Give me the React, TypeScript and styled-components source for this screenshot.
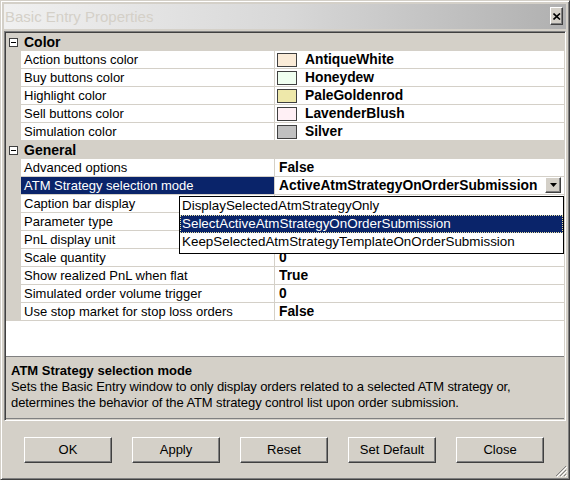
import React from "react";
import styled, { createGlobalStyle } from "styled-components";

const Global = createGlobalStyle`
  html, body { margin: 0; padding: 0; background: #d4d0c8; }
  body { width: 570px; height: 480px; overflow: hidden; font-family: "Liberation Sans", Arial, sans-serif; color: #000; }
  * { box-sizing: border-box; }
`;

const Window = styled.div`
  position: relative;
  width: 570px;
  height: 480px;
  background: #d4d0c8;
  border: 1px solid;
  border-color: #d4d0c8 #404040 #404040 #d4d0c8;
  box-shadow: inset 1px 1px #ffffff, inset -1px -1px #808080;
  padding: 3px;
  display: flex;
  flex-direction: column;
`;

const TitleBar = styled.div`
  height: 25px;
  flex: none;
  display: flex;
  align-items: center;
  justify-content: space-between;
  padding: 0 3px 1px 1px;
  background: linear-gradient(to right, #f0f0f0 0%, #d8d8d8 50%, #b0b0b0 100%);
`;

const TitleText = styled.span`
  font-size: 15px;
  color: #d4d0c8;
  white-space: nowrap;
`;

const CloseButton = styled.div`
  width: 13px;
  height: 18px;
  background: #d4d0c8;
  border: 1px solid;
  border-color: #ffffff #404040 #404040 #ffffff;
  box-shadow: inset -1px -1px #808080;
  display: flex;
  align-items: center;
  justify-content: center;
`;

const Panel = styled.div`
  margin-top: 2px;
  height: 390px;
  flex: none;
  display: flex;
  flex-direction: column;
  border: 1px solid;
  border-color: #808080 #ffffff #ffffff #808080;
  box-shadow: inset 1px 1px #404040, inset -1px -1px #d4d0c8;
  padding: 1px;
`;

const Grid = styled.div`
  height: 323px;
  flex: none;
  background: #ffffff;
  display: flex;
  flex-direction: column;
  overflow: visible;
`;

const Row = styled.div<{ $category?: boolean }>`
  position: relative;
  height: 18px;
  flex: none;
  display: grid;
  grid-template-columns: 15px 254px 1fr;
  background: ${(p) => (p.$category ? "#d4d0c8" : "#ffffff")};
`;

const Gutter = styled.div`
  background: #d4d0c8;
  display: flex;
  align-items: center;
  padding-left: 3px;
`;

const ExpandBox = styled.div`
  width: 9px;
  height: 9px;
  border: 1px solid #404040;
  background: #ffffff;
  position: relative;
  &::after {
    content: "";
    position: absolute;
    left: 1px;
    top: 3px;
    width: 5px;
    height: 1px;
    background: #000;
  }
`;

const CategoryLabel = styled.div`
  grid-column: 2 / 4;
  font-size: 14px;
  font-weight: bold;
  line-height: 18px;
  padding-left: 3px;
`;

const Label = styled.div<{ $selected?: boolean }>`
  font-size: 13px;
  line-height: 17px;
  padding-left: 3px;
  white-space: nowrap;
  overflow: hidden;
  border-right: 1px solid #d4d0c8;
  border-bottom: 1px solid #d4d0c8;
  background: ${(p) => (p.$selected ? "#0a246a" : "#ffffff")};
  color: ${(p) => (p.$selected ? "#ffffff" : "#000000")};
`;

const Value = styled.div<{ $swatch?: boolean }>`
  display: flex;
  align-items: center;
  gap: 8px;
  font-size: 13.8px;
  font-weight: bold;
  line-height: 17px;
  padding-left: ${(p) => (p.$swatch ? "2px" : "4px")};
  padding-right: 3px;
  white-space: nowrap;
  overflow: hidden;
  border-bottom: 1px solid #d4d0c8;
`;

const ValueText = styled.span`
  flex: 1;
  overflow: hidden;
  white-space: nowrap;
`;

const Swatch = styled.span<{ $color: string }>`
  flex: none;
  width: 20px;
  height: 14px;
  border: 1px solid #404040;
  background: ${(p) => p.$color};
`;

const DropButton = styled.div`
  flex: none;
  width: 16px;
  height: 16px;
  margin-top: -1px;
  margin-left: -6px;
  background: #d4d0c8;
  border: 1px solid;
  border-color: #ffffff #404040 #404040 #ffffff;
  box-shadow: inset -1px -1px #808080;
  display: flex;
  align-items: center;
  justify-content: center;
`;

const DropList = styled.div`
  position: absolute;
  left: 173px;
  top: 19px;
  width: 385px;
  height: 58px;
  z-index: 2;
  background: #ffffff;
  border: 1px solid #000000;
  display: flex;
  flex-direction: column;
`;

const DropItem = styled.div<{ $selected?: boolean }>`
  height: 18px;
  line-height: 16px;
  padding-left: 1px;
  font-size: 13.4px;
  white-space: nowrap;
  border: 1px ${(p) => (p.$selected ? "dotted #e8e0a0" : "solid transparent")};
  background: ${(p) => (p.$selected ? "#0a246a" : "#ffffff")};
  color: ${(p) => (p.$selected ? "#ffffff" : "#000000")};
`;

const Filler = styled.div`
  flex: 1;
  background: #ffffff;
`;

const HelpPane = styled.div`
  flex: 1;
  border-top: 1px solid #808080;
  border-bottom: 1px solid #808080;
  padding: 5px 5px 0 5px;
  background: #d4d0c8;
`;

const HelpTitle = styled.div`
  font-size: 13px;
  font-weight: bold;
  line-height: 17px;
`;

const HelpText = styled.div`
  font-size: 13px;
  line-height: 16px;
  letter-spacing: -0.1px;
`;

const ButtonRow = styled.div`
  display: flex;
  gap: 20px;
  padding-left: 20px;
  margin-top: 16px;
`;

const Button = styled.div`
  width: 88px;
  height: 26px;
  background: #d4d0c8;
  border: 1px solid;
  border-color: #ffffff #404040 #404040 #ffffff;
  box-shadow: inset -1px -1px #808080;
  font-size: 13px;
  display: flex;
  align-items: center;
  justify-content: center;
  padding-bottom: 1px;
`;

const Grip = styled.svg`
  position: absolute;
  right: 2px;
  bottom: 2px;
`;

type Prop = { label: string; value: string; swatch?: string };

const colorProps: Prop[] = [
  { label: "Action buttons color", value: "AntiqueWhite", swatch: "#faebd7" },
  { label: "Buy buttons color", value: "Honeydew", swatch: "#f0fff0" },
  { label: "Highlight color", value: "PaleGoldenrod", swatch: "#eee8aa" },
  { label: "Sell buttons color", value: "LavenderBlush", swatch: "#fff0f5" },
  { label: "Simulation color", value: "Silver", swatch: "#c0c0c0" },
];

const generalProps: Prop[] = [
  { label: "Advanced options", value: "False" },
  { label: "ATM Strategy selection mode", value: "ActiveAtmStrategyOnOrderSubmission" },
  { label: "Caption bar display", value: "" },
  { label: "Parameter type", value: "" },
  { label: "PnL display unit", value: "" },
  { label: "Scale quantity", value: "0" },
  { label: "Show realized PnL when flat", value: "True" },
  { label: "Simulated order volume trigger", value: "0" },
  { label: "Use stop market for stop loss orders", value: "False" },
];

const options = [
  "DisplaySelectedAtmStrategyOnly",
  "SelectActiveAtmStrategyOnOrderSubmission",
  "KeepSelectedAtmStrategyTemplateOnOrderSubmission",
];

function Category({ name }: { name: string }) {
  return (
    <Row $category>
      <Gutter>
        <ExpandBox />
      </Gutter>
      <CategoryLabel>{name}</CategoryLabel>
    </Row>
  );
}

function PropRow({ p }: { p: Prop }) {
  const selected = p.label === "ATM Strategy selection mode";
  return (
    <Row>
      <Gutter />
      <Label $selected={selected}>{p.label}</Label>
      <Value $swatch={!!p.swatch}>
        {p.swatch && <Swatch $color={p.swatch} />}
        <ValueText>{p.value}</ValueText>
        {selected && (
          <DropButton>
            <svg width="7" height="4" viewBox="0 0 7 4">
              <path d="M0 0h7L3.5 4z" fill="#000" />
            </svg>
          </DropButton>
        )}
      </Value>
      {selected && (
        <DropList>
          {options.map((o, i) => (
            <DropItem key={o} $selected={i === 1}>
              {o}
            </DropItem>
          ))}
        </DropList>
      )}
    </Row>
  );
}

export default function App() {
  return (
    <>
      <Global />
      <Window>
        <TitleBar>
          <TitleText>Basic Entry Properties</TitleText>
          <CloseButton>
            <svg width="8" height="7" viewBox="0 0 8 7">
              <path d="M0.5 0.5L7 6.5M7 0.5L0.5 6.5" stroke="#000" strokeWidth="1.6" />
            </svg>
          </CloseButton>
        </TitleBar>
        <Panel>
          <Grid>
            <Category name="Color" />
            {colorProps.map((p) => (
              <PropRow key={p.label} p={p} />
            ))}
            <Category name="General" />
            {generalProps.map((p) => (
              <PropRow key={p.label} p={p} />
            ))}
            <Filler />
          </Grid>
          <HelpPane>
            <HelpTitle>ATM Strategy selection mode</HelpTitle>
            <HelpText>
              Sets the Basic Entry window to only display orders related to a selected ATM strategy or,
              <br />
              determines the behavior of the ATM strategy control list upon order submission.
            </HelpText>
          </HelpPane>
        </Panel>
        <ButtonRow>
          <Button>OK</Button>
          <Button>Apply</Button>
          <Button>Reset</Button>
          <Button>Set Default</Button>
          <Button>Close</Button>
        </ButtonRow>
        <Grip width="12" height="12" viewBox="0 0 12 12">
          <path d="M11 1L1 11M11 5L5 11M11 9L9 11" stroke="#808080" strokeWidth="1" />
          <path d="M12 2L2 12M12 6L6 12M12 10L10 12" stroke="#ffffff" strokeWidth="1" />
        </Grip>
      </Window>
    </>
  );
}
